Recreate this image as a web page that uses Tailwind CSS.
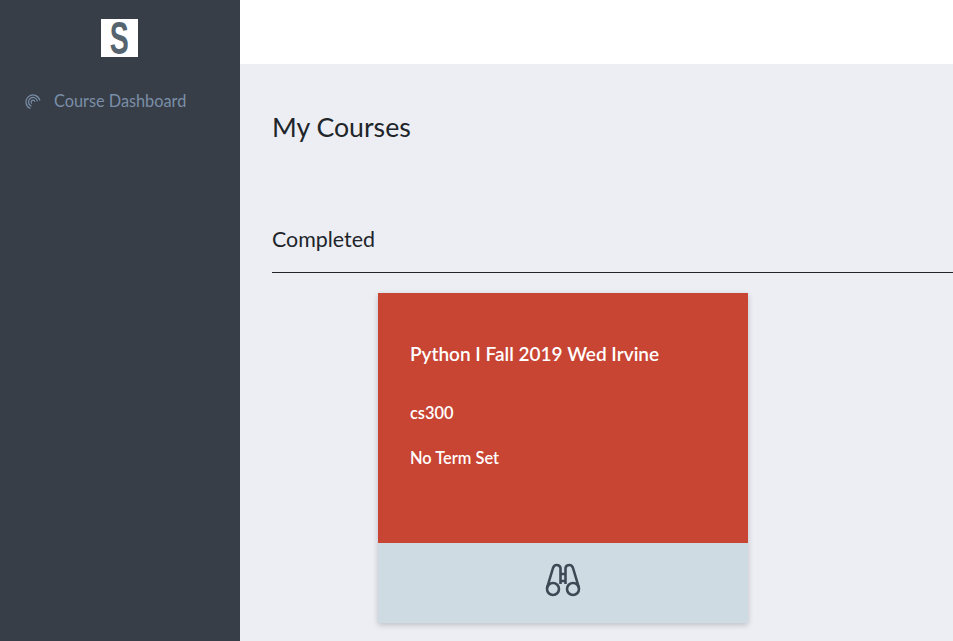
<!DOCTYPE html>
<html lang="en">
  <head>
    <meta charset="UTF-8" />
    <title>My Courses</title>
    <script src="https://cdn.jsdelivr.net/npm/@tailwindcss/browser@4"></script>
  </head>
  <body class="bg-[#eceef4] text-[#212529] font-['Lato','Noto_Sans',sans-serif] overflow-hidden">
    <div class="flex h-[641px] w-[953px] overflow-hidden">
      <!-- Sidebar -->
      <aside class="w-[240px] shrink-0 bg-[#373e47]">
        <div class="flex justify-center pt-[19px] pr-[1px]">
          <div class="w-[37px] h-[38px] bg-white flex items-center justify-center">
            <span class="font-['Liberation_Sans',sans-serif] font-bold text-[46px] leading-[38px] text-[#56646f] scale-x-[0.62]">S</span>
          </div>
        </div>
        <a class="flex items-center mt-[34px] pl-[24px] h-[20px] text-[#7b8ea8] text-[16.3px]">
          <svg class="w-[17px] h-[17px]" viewBox="0 0 17 17" fill="none" stroke="currentColor" stroke-width="1.2" stroke-linecap="round">
            <path d="M6 15.3A7 7 0 1 1 15.8 7.2" />
            <path d="M7 13A4.5 4.5 0 1 1 13.4 8" />
            <path d="M7.6 10.1A1.8 1.8 0 1 1 10.7 8.4" />
          </svg>
          <span class="ml-[13px]">Course Dashboard</span>
        </a>
      </aside>

      <div class="flex-1 min-w-0">
        <header class="h-[64px] bg-white"></header>
        <main class="pl-[32px]">
          <h1 class="mt-[47px] text-[26.7px] leading-[32px] font-normal">My Courses</h1>
          <h2 class="mt-[82px] text-[21.4px] leading-[28px] font-normal">Completed</h2>
          <div class="mt-[19px] h-px bg-[#212529]"></div>

          <!-- Course card -->
          <section class="ml-[106px] mt-[20px] w-[370px] shadow-[0_2px_6px_rgba(0,0,0,0.2)]">
            <div class="h-[250px] bg-[#c84433] text-white pl-[32px] pt-[50px] font-semibold">
              <h3 class="text-[19px] leading-[22px]">Python I Fall 2019 Wed Irvine</h3>
              <p class="mt-[38px] text-[16.4px] leading-[20px]">cs300</p>
              <p class="mt-[25px] text-[16.4px] leading-[20px]">No Term Set</p>
            </div>
            <div class="h-[80px] bg-[#cfdbe3] flex items-center justify-center pb-[6px]">
              <svg class="w-[36px] h-[34px] text-[#3d4a56]" viewBox="0 0 36 34" fill="none" stroke="currentColor" stroke-width="2.6" stroke-linejoin="round">
                <circle cx="8" cy="26" r="6" />
                <circle cx="28" cy="26" r="6" />
                <path d="M2 25 L8 5 Q9 2 11.5 2 Q15 2 15.5 5 L15.5 21" />
                <path d="M34 25 L28 5 Q27 2 24.5 2 Q21 2 20.5 5 L20.5 21" />
                <path d="M15.5 11 H20.5 M15.5 18 H20.5" />
              </svg>
            </div>
          </section>
        </main>
      </div>
    </div>
  </body>
</html>
